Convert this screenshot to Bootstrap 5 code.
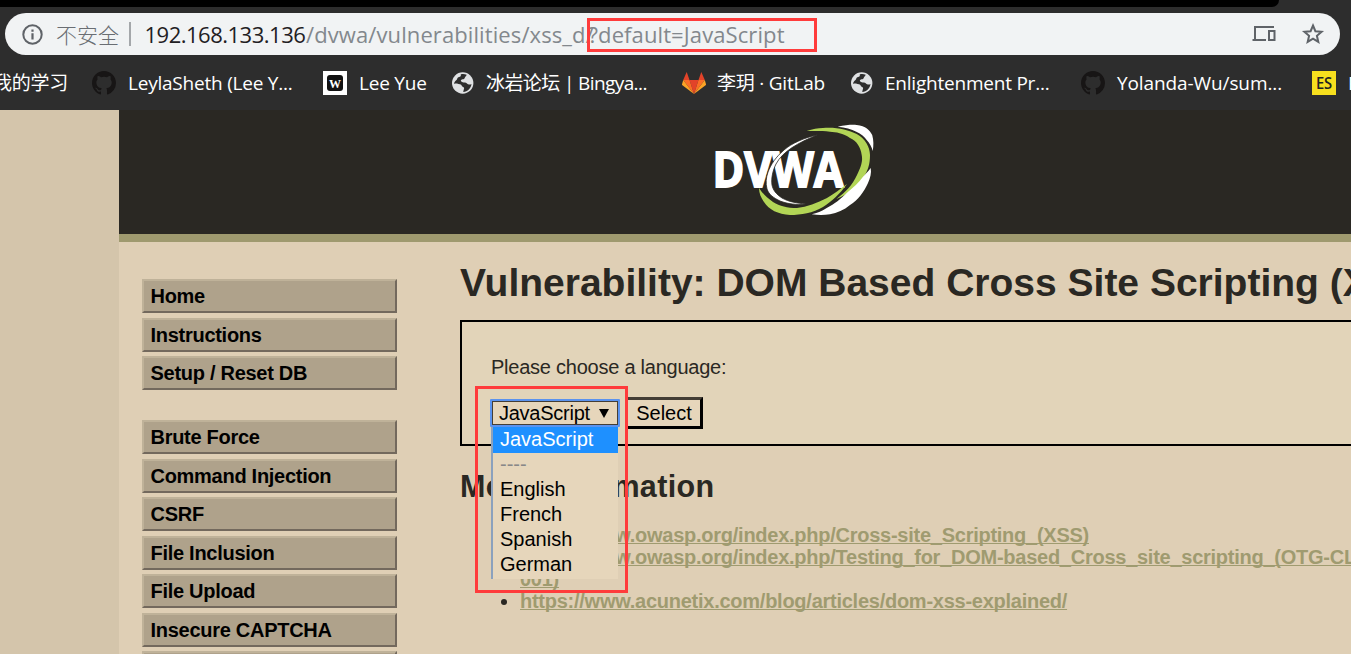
<!DOCTYPE html>
<html lang="en">
<head>
<meta charset="utf-8">
<title>Vulnerability: DOM Based Cross Site Scripting (XSS)</title>
<link rel="stylesheet" href="https://cdn.jsdelivr.net/npm/bootstrap@5.3.0/dist/css/bootstrap.min.css">
<style>
body{height:654px;overflow:hidden;background:#d4c5ab;color:#2a2823;font-family:"Liberation Sans",Arial,sans-serif;font-size:20px;line-height:22px}
.browser{height:110px;background:#2d2d2d;font-family:"Open Sans","Noto Sans CJK SC",sans-serif}
.tabstrip{height:7px;width:1279px;background:#000;border-bottom-right-radius:8px}
.omnibox{height:42px;width:1335px;margin:6px 0 0 5px;border-radius:21px;background:#f1f3f4;color:#83888d;font-size:22px;line-height:41px;padding-left:17px;padding-right:15px}
.unsafe{font-size:21px;color:#6a6e73;margin-left:13px;width:63px;font-family:"Noto Sans CJK SC",sans-serif;font-weight:300}
.sep{width:2px;height:24px;background:#a4a7aa;margin:0 13.500px 0 10px}
.host{color:#1f2023;width:161.500px;letter-spacing:-.5px}
.pathpart{width:282.500px;letter-spacing:.1px}
.query{letter-spacing:.1px}
.marks{height:55px;color:#fff;font-size:19px;position:relative;letter-spacing:-.22px}
.bm{height:55px;display:flex;align-items:center;white-space:nowrap;flex:none}
.bm svg{flex:none;margin-right:12px;width:24px;height:24px}
.page{margin-left:119px;background:#dfcfb5;height:544px;width:1232px;overflow:hidden}
.masthead{height:132px;background:#2a2823;border-bottom:8px solid #9f9a6f;padding:14px 0 0 595px}
.sidemenu{width:255px;margin:37px 0 0 23px;flex:none}
.sidemenu .menu-item{display:block;height:34px;margin-bottom:4.5px;background:#afa28b;border:2px solid;border-color:#bfb299 #73695d #73695d #bfb299;font-weight:700;color:#000;line-height:30px;padding-left:6.5px;letter-spacing:-.28px;text-decoration:none}
.sidemenu .menu-group{margin-bottom:25.7px;padding-bottom:.1px}
.main{margin-left:63px;width:1040px;flex:none}
.main h1{font-size:39px;font-weight:700;line-height:46px;margin:18px 0 14px;white-space:nowrap}
.vuln{height:126px;border:2px solid #000;background:#e2d4b9;padding:34px 29px 0}
.vuln p{margin:0 0 21px;letter-spacing:-.24px;height:22px}
.picker{width:130px;height:28px;margin-left:-1px;border:2px solid #5b93ee;border-radius:1px;background:#e6d6bb;color:#000}
.picker .inner{border:1px solid #443e36;height:24px;line-height:23px;padding:0 8px 0 6px;letter-spacing:-.25px}
.options{position:absolute;left:-1px;top:26px;width:127px;height:152px;background:#e6d6bb;border-left:2px solid #8ba1bd;line-height:25px;padding-left:7px;z-index:3}
.options .on{background:#1e90ff;color:#fff;margin-left:-7px;padding-left:7px;height:26px;line-height:24px;margin-bottom:-1px}
.send{width:78px;height:32px;border:3px solid #000;border-color:#443e36 #000 #000 #443e36;background:#e6d6bb;color:#000;padding:0;font-size:20px;line-height:24px;margin:-2px 0 0 5px}
.main h2{font-size:30.500px;font-weight:700;line-height:36px;margin:22px 0 20px;letter-spacing:.33px}
.main ul{padding-left:60px;margin:0;white-space:nowrap}
.reflink{color:#9f9b70;font-weight:700;letter-spacing:-.255px;text-decoration:underline;text-decoration-thickness:1px;text-underline-offset:1px;text-decoration-skip-ink:none}
.marker{position:absolute;border:3px solid #ff3b3b;z-index:5;pointer-events:none}
.m-url{left:587px;top:18px;width:230px;height:34px}
.m-select{left:475px;top:386px;width:153px;height:207px}
</style>
</head>
<body>
<svg width="0" height="0" class="position-absolute">
<symbol id="cat" viewBox="0 0 16 16"><path fill="#171515" d="M8 0C3.58 0 0 3.58 0 8c0 3.54 2.29 6.53 5.47 7.59.4.07.55-.17.55-.38 0-.19-.01-.82-.01-1.49-2.01.37-2.53-.49-2.69-.94-.09-.23-.48-.94-.82-1.13-.28-.15-.68-.52-.01-.53.63-.01 1.08.58 1.23.82.72 1.21 1.87.87 2.33.66.07-.52.28-.87.51-1.07-1.78-.2-3.64-.89-3.64-3.95 0-.87.31-1.59.82-2.15-.08-.2-.36-1.02.08-2.12 0 0 .67-.21 2.2.82a7.6 7.6 0 0 1 4 0c1.53-1.04 2.2-.82 2.2-.82.44 1.1.16 1.92.08 2.12.51.56.82 1.27.82 2.15 0 3.07-1.87 3.75-3.65 3.95.29.25.54.73.54 1.48 0 1.07-.01 1.93-.01 2.2 0 .21.15.46.55.38A8 8 0 0 0 16 8c0-4.42-3.58-8-8-8z"/></symbol>
<symbol id="globe" viewBox="0 0 24 24"><circle cx="12.700" cy="12" r="10.700" fill="#dfe1e3"/><path fill="#2d2d2d" d="M4 12.500c2 .8 4 .3 6 .8 2 .3 1.500 2 2.700 2.500 1.500.6 1.800 1.800 1 3l-.5 2.200c4.500-.4 7.800-3.800 8.300-8-1.500 1-3.500.6-4.500-.5-1.200-1.300-3-.8-4.300-1.300-1.700-.5-2.500-2-1.300-2.500 1.500-.4 3-.3 3.300-1.600.2-1.500 1.500-1.700 2-3.400-2-.8-4.300-.9-6-.3.500 1.300-.2 2.400-1.700 2.600C7 6.300 7.500 8 6.500 9c-.7.8-2 1.500-2.500 3.500z"/></symbol>
</svg>

<header class="browser overflow-hidden">
  <div class="tabstrip"></div>
  <div class="omnibox d-flex align-items-center text-nowrap">
    <svg width="21" height="21" viewBox="0 0 21 21" class="flex-shrink-0"><circle cx="10.500" cy="10.500" r="9.200" fill="none" stroke="#5f6368" stroke-width="2"/><path fill="#5f6368" d="M9.400 5.500h2.200v2.200H9.400zM9.400 9.300h2.200v6.200H9.400z"/></svg>
    <span class="unsafe">不安全</span><span class="sep"></span>
    <span class="host">192.168.133.136</span><span class="pathpart">/dvwa/vulnerabilities/xss_d/</span><span class="query">?default=JavaScript</span>
    <svg class="ms-auto flex-shrink-0" width="24" height="18" viewBox="0 0 24 18" fill="none" stroke="#5f6368" stroke-width="2"><path d="M3 14V2h19M.500 15h13.500"/><path d="M17 6h5.500v9H17z"/></svg>
    <svg class="flex-shrink-0" style="margin-left:25px" width="24" height="24" viewBox="0 0 24 24"><path fill="none" stroke="#5f6368" stroke-width="2" d="M12 3.500l2.400 5.700 6.200.5-4.700 4.100 1.400 6L12 16.600l-5.300 3.200 1.400-6-4.700-4.100 6.200-.5z"/></svg>
  </div>
  <nav class="marks d-flex">
    <div class="bm" style="width:92px;margin-left:-7px">我的学习</div>
    <div class="bm" style="width:231px;margin-left:7px"><svg><use href="#cat"/></svg>LeylaSheth (Lee Y...</div>
    <div class="bm" style="width:127px"><svg viewBox="0 0 24 24"><path fill="#fff" d="M0 0h24v24H0z"/><rect x="4" y="4" width="16" height="16" rx="3" fill="#111"/><text x="12" y="16.500" text-anchor="middle" font-family="Liberation Serif" font-weight="700" font-size="12" fill="#fff">W</text></svg>Lee Yue</div>
    <div class="bm" style="width:231px"><svg><use href="#globe"/></svg><span style="letter-spacing:-.6px">冰岩论坛 | Bingya...</span></div>
    <div class="bm" style="width:168px"><svg viewBox="0 0 24 24" style="margin-left:1px;margin-right:11px"><path fill="#e24329" d="M12 23L7.500 9h9z"/><path fill="#fc6d26" d="M12 23L7.500 9H1.200zM12 23l4.500-14h6.300z"/><path fill="#fca326" d="M1.200 9L0 13.200c-.1.500 0 .8.400 1.100L12 23zM22.800 9l1.200 4.200c.1.500 0 .8-.4 1.100L12 23z"/><path fill="#e24329" d="M1.200 9h6.300L4.700 1zM22.800 9h-6.300l2.800-8z"/></svg>李玥 · GitLab</div>
    <div class="bm" style="width:232px"><svg><use href="#globe"/></svg>Enlightenment Pr...</div>
    <div class="bm" style="width:231px;letter-spacing:-.1px"><svg><use href="#cat"/></svg>Yolanda-Wu/sum...</div>
    <div class="bm"><svg viewBox="0 0 24 24"><path fill="#f7df1e" d="M0 0h24v24H0z"/><text x="12" y="18" text-anchor="middle" font-family="Open Sans" font-weight="600" font-size="16.500" textLength="16" lengthAdjust="spacingAndGlyphs" fill="#222">ES</text></svg>ES</div>
  </nav>
</header>

<div class="page">
  <div class="masthead">
    <svg width="162" height="94" viewBox="0 0 162 94">
      <text x="-1.500" y="63" fill="#fff" stroke="#fff" stroke-width="1.800" font-family="Open Sans" font-weight="700" font-size="49" textLength="131" lengthAdjust="spacingAndGlyphs">DVWA</text>
      <path fill="#fff" d="M123.700 2.700C132 1 138 .5 142.700 1c9 1 13 5 15.500 10 1.500 5 1.500 11 .5 16-1-4-3-8-6-11-4-6-14-12-29-13.300z"/>
      <path fill="#b2d556" d="M92.700 7c6-2 11-3 16.300-3 14-1 25 2 33.700 6 9 5 13 13 13.300 21 0 9-2 16-7 23-6 9-16 17-26.500 21 9-7 16-14 20.500-24 4-8 6-14 4.700-20-1-8-5-14-11.700-17-7-5-14-6-20-6.300-8-1-15-.7-23.300-.7z"/>
      <path fill="#fff" d="M156.700 44c1 5-.5 10-2.700 15-4 9-10 17-18 22-6 5-13 8-20 9.300-6 .8-12 .8-18.300 0 5-1 10-3 15-6.300 8-4 14-9 20-15 7-6 12-10 16.300-16.300 3-3 5-5 7.700-8.700z"/>
      <path fill="#b2d556" d="M45 64c4 6 8 10 14 14 7 4 14 6 24 6 10-1 20-5 30-10 7-4 13-9 20-14-7 10-15 17-24 23-10 6-22 8-33 8-12-1-21-5-26-13-3-4-5-9-5-14z"/>
      <path fill="#fff" stroke="#2a2823" stroke-width=".8" d="M104 10.500C90 14 78 19 70 26c-8 7-13 14-16 22-2 6-2.500 11-1 17 2 6 7 9 13 12 8 3 16 4 26 3-9-1-17-2-24-6-6-4-9-8-10-13-1-7 1-15 4-21C69 27 84 19 104 10.500z"/>
    </svg>
  </div>
  <div class="d-flex">
    <nav class="sidemenu">
      <div class="menu-group"><a class="menu-item">Home</a><a class="menu-item">Instructions</a><a class="menu-item">Setup / Reset DB</a></div>
      <div class="menu-group"><a class="menu-item">Brute Force</a><a class="menu-item">Command Injection</a><a class="menu-item">CSRF</a><a class="menu-item">File Inclusion</a><a class="menu-item">File Upload</a><a class="menu-item">Insecure CAPTCHA</a><a class="menu-item"></a></div>
    </nav>
    <main class="main">
      <h1>Vulnerability: DOM Based Cross Site Scripting (XSS)</h1>
      <section class="vuln">
        <p>Please choose a language:</p>
        <div class="d-flex">
          <div class="picker position-relative">
            <div class="inner d-flex justify-content-between"><span>JavaScript</span><svg width="10" height="24" viewBox="0 0 10 24"><path d="M0 7h10L5 16z"/></svg></div>
            <div class="options"><div class="on">JavaScript</div><div style="color:#888">----</div><div>English</div><div>French</div><div>Spanish</div><div>German</div></div>
          </div>
          <button class="send">Select</button>
        </div>
      </section>
      <h2>More Information</h2>
      <ul>
        <li><a class="reflink">https://www.owasp.org/index.php/Cross-site_Scripting_(XSS)</a></li>
        <li><a class="reflink">https://www.owasp.org/index.php/Testing_for_DOM-based_Cross_site_scripting_(OTG-CLIENT-<br>001)</a></li>
        <li><a class="reflink">https://www.acunetix.com/blog/articles/dom-xss-explained/</a></li>
      </ul>
    </main>
  </div>
</div>
<div class="marker m-url"></div>
<div class="marker m-select"></div>
<script src="https://cdn.jsdelivr.net/npm/bootstrap@5.3.0/dist/js/bootstrap.bundle.min.js"></script>
</body>
</html>
